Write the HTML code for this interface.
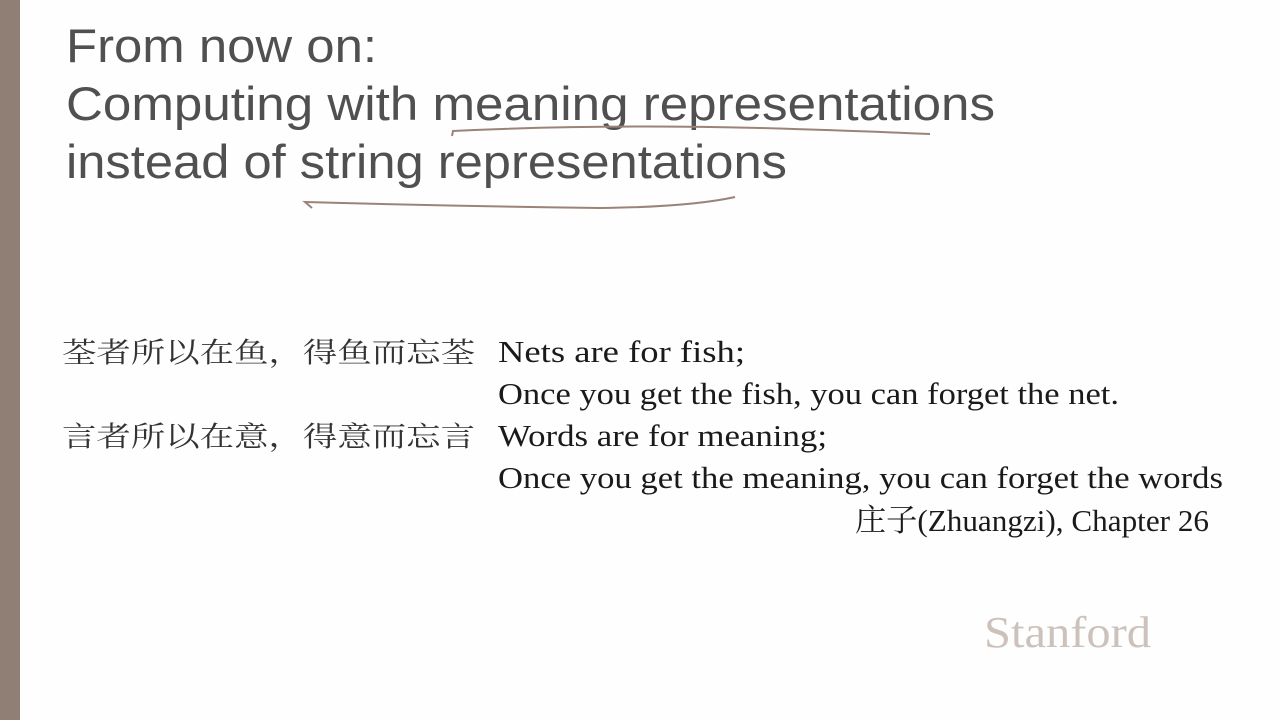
<!DOCTYPE html>
<html><head><meta charset="utf-8"><style>
html,body{margin:0;padding:0;background:#fff;width:1280px;height:720px;overflow:hidden}
</style></head><body>
<svg width="1280" height="720" xmlns="http://www.w3.org/2000/svg">
<rect width="1280" height="720" fill="#fefefe"/>
<rect x="0" y="0" width="20" height="720" fill="#8f7f74"/>
<g font-family="Liberation Sans, sans-serif" font-size="47" fill="#505050">
<text x="66" y="62" textLength="311" lengthAdjust="spacingAndGlyphs">From now on:</text>
<text x="66" y="120" textLength="929" lengthAdjust="spacingAndGlyphs">Computing with meaning representations</text>
<text x="66" y="178" textLength="721" lengthAdjust="spacingAndGlyphs">instead of string representations</text>
</g>
<path d="M452 136 L453 131 Q600 124 760 128 Q860 131 930 134" stroke="#9a8378" stroke-width="2" fill="none"/>
<path d="M312 208 L305 202 Q450 206 600 208 Q690 207 735 197" stroke="#9a8378" stroke-width="2" fill="none"/>
<g font-family="Liberation Serif, Noto Serif CJK SC, serif" font-size="31" fill="#1a1a1a">
<text x="62" y="362" textLength="413" lengthAdjust="spacingAndGlyphs" fill="#333" font-size="28">荃者所以在鱼，得鱼而忘荃</text>
<text x="62" y="446" textLength="413" lengthAdjust="spacingAndGlyphs" fill="#333" font-size="28">言者所以在意，得意而忘言</text>
<text x="498" y="362" textLength="247" lengthAdjust="spacingAndGlyphs">Nets are for fish;</text>
<text x="498" y="404" textLength="621" lengthAdjust="spacingAndGlyphs">Once you get the fish, you can forget the net.</text>
<text x="498" y="446" textLength="329" lengthAdjust="spacingAndGlyphs">Words are for meaning;</text>
<text x="498" y="488" textLength="725" lengthAdjust="spacingAndGlyphs">Once you get the meaning, you can forget the words</text>
<text x="855" y="531" textLength="354" lengthAdjust="spacingAndGlyphs">庄子(Zhuangzi), Chapter 26</text>
</g>
<text x="984" y="647" font-family="Liberation Serif, serif" font-size="44" fill="#cdc2bb" textLength="167" lengthAdjust="spacingAndGlyphs">Stanford</text>
</svg>
</body></html>
